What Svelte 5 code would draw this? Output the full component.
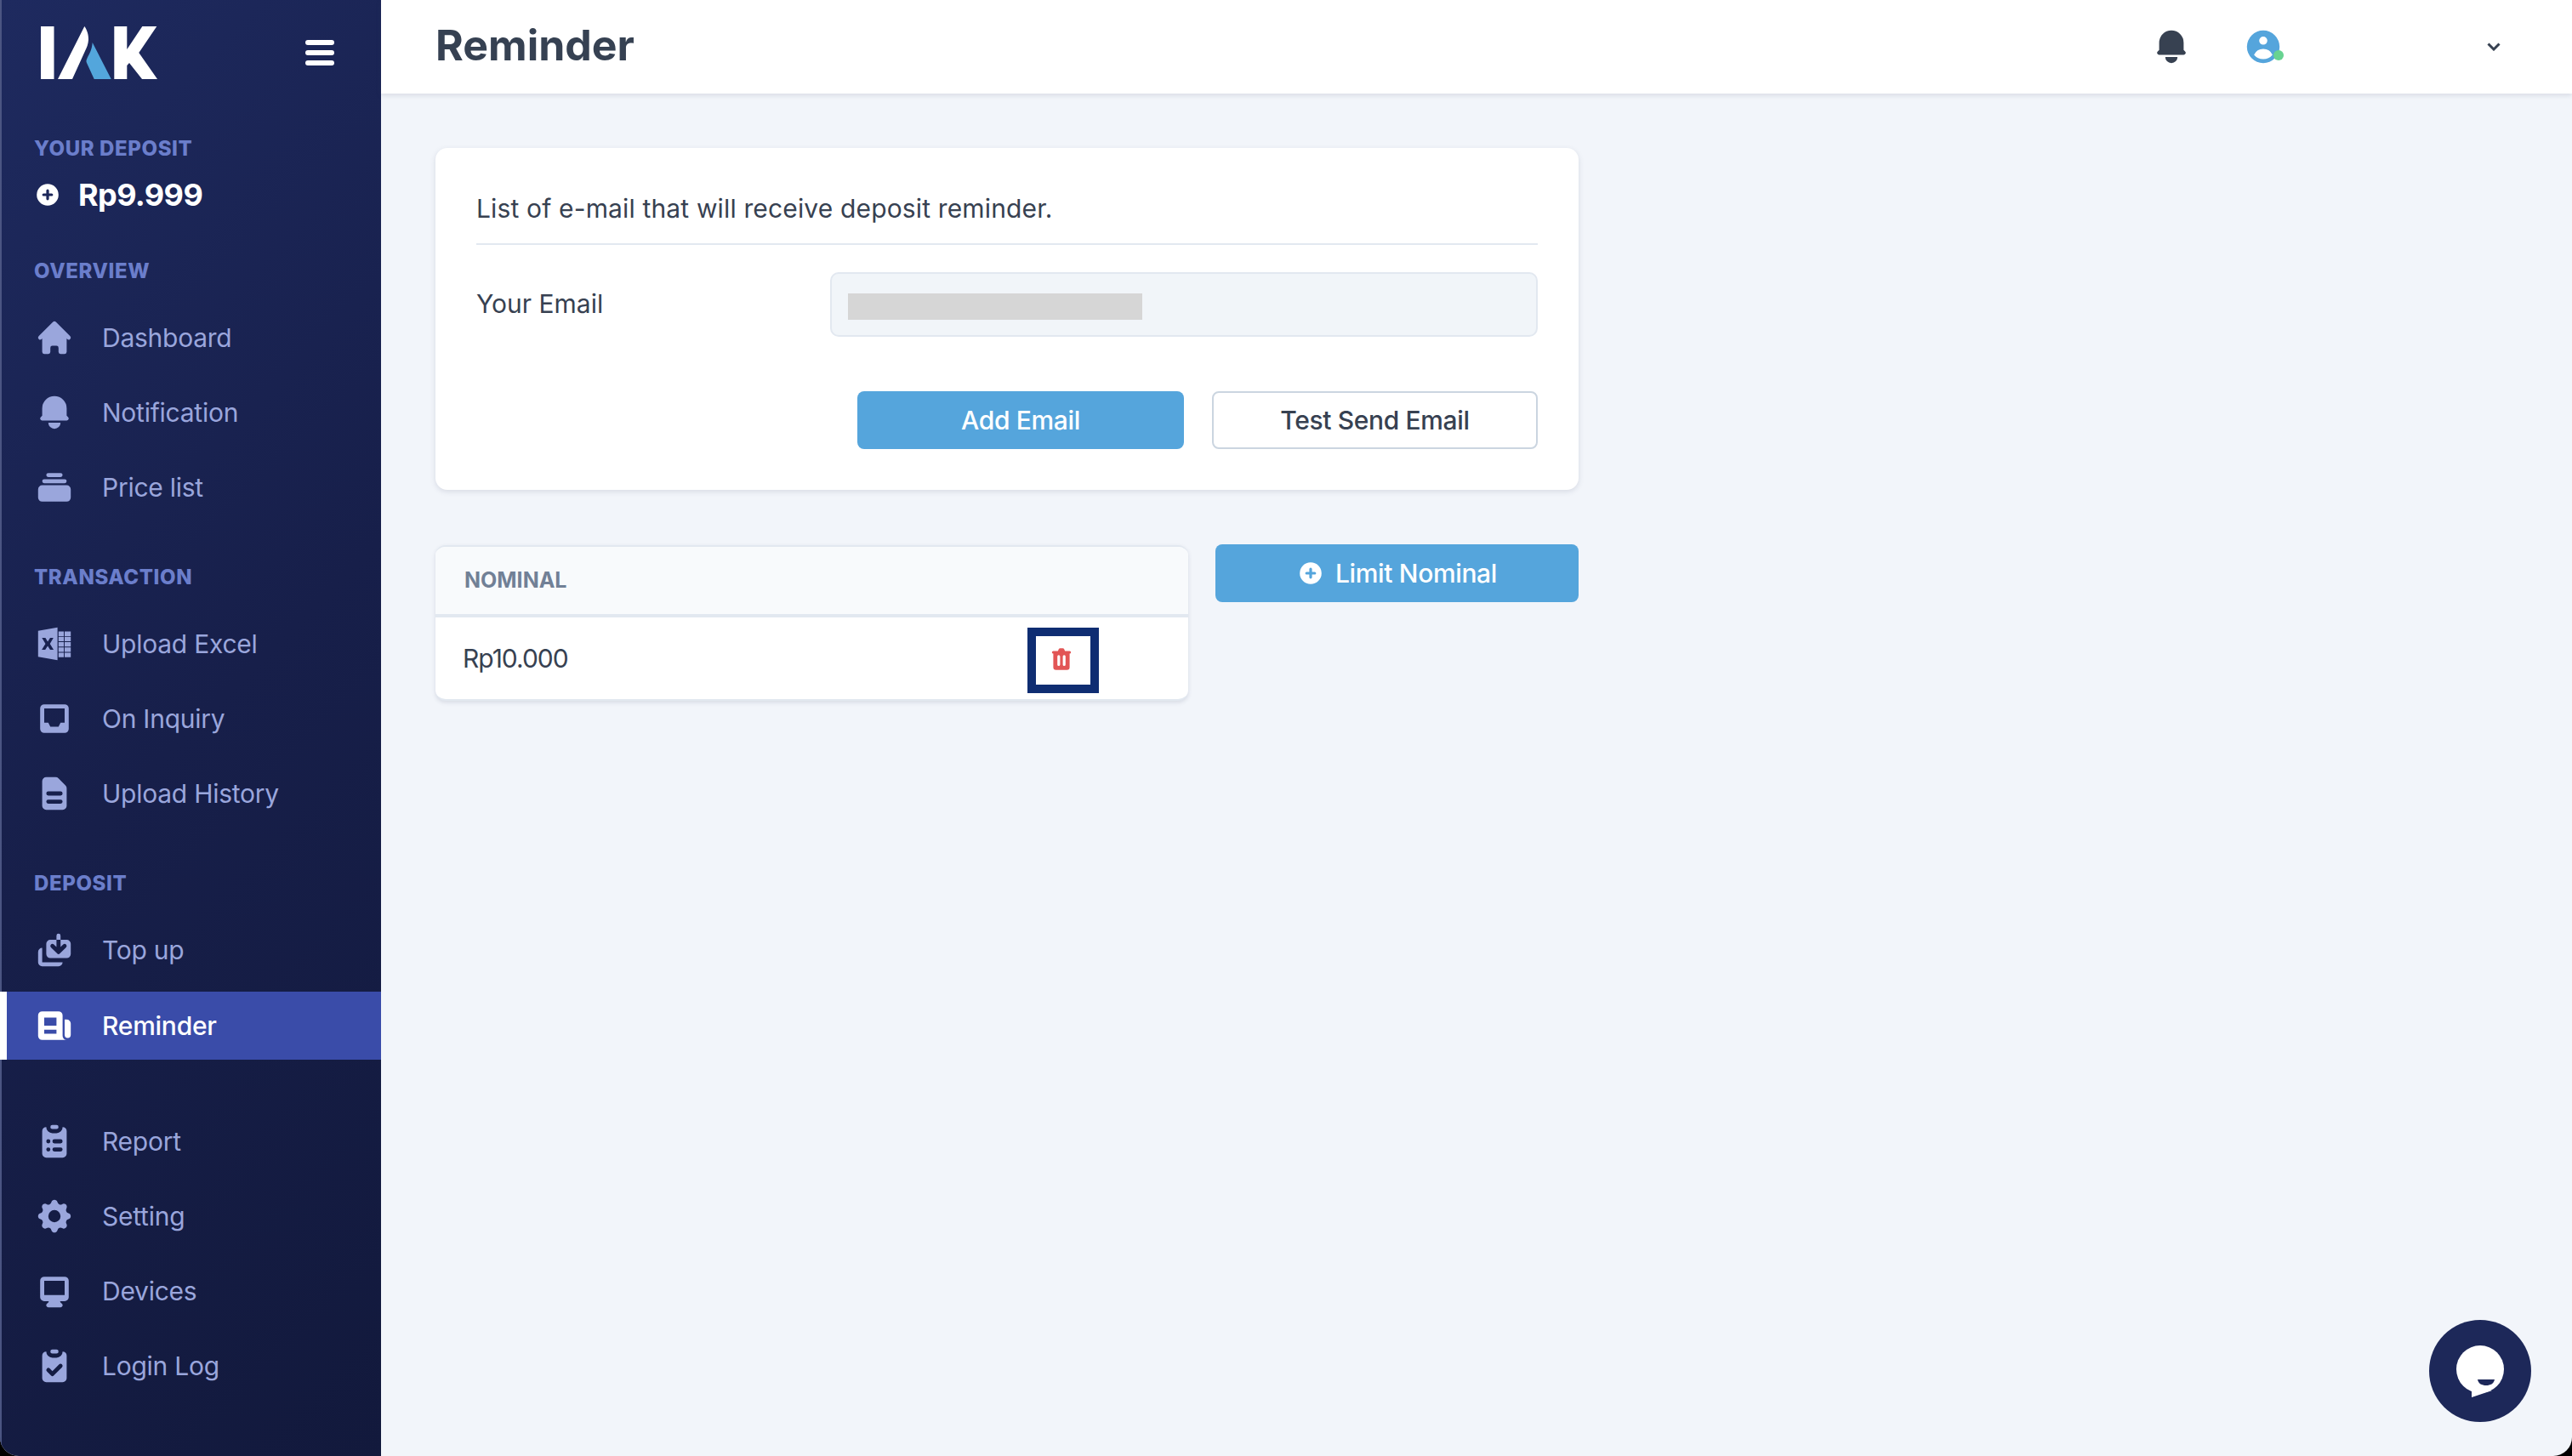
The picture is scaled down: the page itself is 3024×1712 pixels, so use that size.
<script>
  const rows = [];
  for (const y of [4, 6.6, 9.2, 11.8, 14.4]) {
    for (const [x, w] of [[12, 2.6], [15, 3]]) rows.push(`M${x} ${y}h${w}v2.2h-${w}z`);
  }
  const icons = {
    home: 'M10.707 2.293a1 1 0 00-1.414 0l-7 7a1 1 0 001.414 1.414L4 10.414V17a1 1 0 001 1h2a1 1 0 001-1v-2a1 1 0 011-1h2a1 1 0 011 1v2a1 1 0 001 1h2a1 1 0 001-1v-6.586l.293.293a1 1 0 001.414-1.414l-7-7z',
    bell: 'M10 2a6 6 0 00-6 6v3.586l-.707.707A1 1 0 004 14h12a1 1 0 00.707-1.707L16 11.586V8a6 6 0 00-6-6zM10 18a3 3 0 01-3-3h6a3 3 0 01-3 3z',
    collection: 'M7 3a1 1 0 000 2h6a1 1 0 100-2H7zM4 7a1 1 0 011-1h10a1 1 0 110 2H5a1 1 0 01-1-1zM2 11a2 2 0 012-2h12a2 2 0 012 2v4a2 2 0 01-2 2H4a2 2 0 01-2-2v-4z',
    excel: 'M2 3.6L11.5 2v16L2 16.4zM3.9 7.1L5.6 10l-1.8 2.9h1.7L6.7 11l1.2 1.9h1.7L7.8 10l1.7-2.9H7.9L6.7 9 5.6 7.1z' + rows.join(''),
    inbox: 'M5 3a2 2 0 00-2 2v10a2 2 0 002 2h10a2 2 0 002-2V5a2 2 0 00-2-2H5zm0 2h10v7h-2l-1 2H8l-1-2H5V5z',
    doc: 'M4 4a2 2 0 012-2h4.586A2 2 0 0112 2.586L15.414 6A2 2 0 0116 7.414V16a2 2 0 01-2 2H6a2 2 0 01-2-2V4zm2 6a1 1 0 011-1h6a1 1 0 110 2H7a1 1 0 01-1-1zm1 3a1 1 0 100 2h6a1 1 0 100-2H7z',
    saveas: 'M9.707 7.293a1 1 0 00-1.414 1.414l3 3a1 1 0 001.414 0l3-3a1 1 0 00-1.414-1.414L13 8.586V5h3a2 2 0 012 2v5a2 2 0 01-2 2H8a2 2 0 01-2-2V7a2 2 0 012-2h3v3.586L9.707 7.293zM11 3a1 1 0 112 0v2h-2V3zM4 9a2 2 0 00-2 2v5a2 2 0 002 2h8a2 2 0 002-2H4V9z',
    news: 'M2 5a2 2 0 012-2h8a2 2 0 012 2v10a2 2 0 002 2H4a2 2 0 01-2-2V5zm3 1h6v4H5V6zm6 6H5v2h6v-2zM15 7h1a2 2 0 012 2v5.5a1.5 1.5 0 01-3 0V7z',
    list: 'M9 2a1 1 0 000 2h2a1 1 0 100-2H9zM4 5a2 2 0 012-2 3 3 0 003 3h2a3 3 0 003-3 2 2 0 012 2v11a2 2 0 01-2 2H6a2 2 0 01-2-2V5zm3 4a1 1 0 000 2h.01a1 1 0 100-2H7zm3 0a1 1 0 000 2h3a1 1 0 100-2h-3zm-3 4a1 1 0 100 2h.01a1 1 0 100-2H7zm3 0a1 1 0 100 2h3a1 1 0 100-2h-3z',
    cog: 'M11.49 3.17c-.38-1.56-2.6-1.56-2.98 0a1.532 1.532 0 01-2.286.948c-1.372-.836-2.942.734-2.106 2.106.54.886.061 2.042-.947 2.287-1.561.379-1.561 2.6 0 2.978a1.532 1.532 0 01.947 2.287c-.836 1.372.734 2.942 2.106 2.106a1.532 1.532 0 012.287.947c.379 1.561 2.6 1.561 2.978 0a1.533 1.533 0 012.287-.947c1.372.836 2.942-.734 2.106-2.106a1.533 1.533 0 01.947-2.287c1.561-.379 1.561-2.6 0-2.978a1.532 1.532 0 01-.947-2.287c.836-1.372-.734-2.942-2.106-2.106a1.532 1.532 0 01-2.287-.947zM10 13a3 3 0 100-6 3 3 0 000 6z',
    desktop: 'M3 5a2 2 0 012-2h10a2 2 0 012 2v8a2 2 0 01-2 2h-2.22l.123.489.804.804A1 1 0 0113 18H7a1 1 0 01-.707-1.707l.804-.804L7.22 15H5a2 2 0 01-2-2V5zm5.771 7H5V5h10v7H8.771z',
    check: 'M9 2a1 1 0 000 2h2a1 1 0 100-2H9zM4 5a2 2 0 012-2 3 3 0 003 3h2a3 3 0 003-3 2 2 0 012 2v11a2 2 0 01-2 2H6a2 2 0 01-2-2V5zm9.707 5.707a1 1 0 00-1.414-1.414L9 12.586l-1.293-1.293a1 1 0 00-1.414 1.414l2 2a1 1 0 001.414 0l4-4z',
    user: 'M18 10a8 8 0 11-16 0 8 8 0 0116 0zm-6-3a2 2 0 11-4 0 2 2 0 014 0zm-2 4a5 5 0 00-4.546 2.916A5.986 5.986 0 0010 16a5.986 5.986 0 004.546-2.084A5 5 0 0010 11z',
    trash: 'M9 2a1 1 0 00-.894.553L7.382 4H4a1 1 0 000 2v10a2 2 0 002 2h8a2 2 0 002-2V6a1 1 0 100-2h-3.382l-.724-1.447A1 1 0 0011 2H9zM7 8a1 1 0 012 0v6a1 1 0 11-2 0V8zm5-1a1 1 0 00-1 1v6a1 1 0 102 0V8a1 1 0 00-1-1z',
    plus: 'M10 18a8 8 0 100-16 8 8 0 000 16zm1-11a1 1 0 10-2 0v2H7a1 1 0 100 2h2v2a1 1 0 102 0v-2h2a1 1 0 100-2h-2V7z'
  };
  const groups = [
    { label: 'OVERVIEW', items: [['home', 'Dashboard'], ['bell', 'Notification'], ['collection', 'Price list']] },
    { label: 'TRANSACTION', items: [['excel', 'Upload Excel'], ['inbox', 'On Inquiry'], ['doc', 'Upload History']] },
    { label: 'DEPOSIT', items: [['saveas', 'Top up'], ['news', 'Reminder']] },
    { label: '', items: [['list', 'Report'], ['cog', 'Setting'], ['desktop', 'Devices'], ['check', 'Login Log']] }
  ];
</script>

<div class="window">
  <aside class="sidebar">
    <div class="brand">
      <svg class="logo" viewBox="48 31 137 62" aria-label="IAK logo">
        <path fill="#fff" d="M48 31h15.5v62H48zM68 93L99.3 31c3 4 5 10 4.7 16-.3 5-2 9-4 13L85 93zM134.300 31h15v27l18-27h17l-21 31 21.700 31h-18l-15-19-2.700 3V93h-15z" />
        <path fill="#53a6dc" d="M108.700 50L130.700 93h-20l-8.700-19c-1-2-.5-3.500.7-6 2.500-5 5.500-10 6-18z" />
      </svg>
      <div class="burger"><span></span><span></span><span></span></div>
    </div>
    <div class="deposit">
      <div class="label">YOUR DEPOSIT</div>
      <div class="amount">
        <svg class="plus" viewBox="0 0 20 20"><path fill="#fff" fill-rule="evenodd" d={icons.plus} /></svg>
        <span>Rp9.999</span>
      </div>
    </div>
    {#each groups as g}
      <section class="group" class:plain={!g.label}>
        {#if g.label}<div class="label">{g.label}</div>{/if}
        {#each g.items as [ic, name]}
          <div class="item" class:active={name === 'Reminder'}>
            <svg viewBox="0 0 20 20"><path fill="currentColor" fill-rule="evenodd" d={icons[ic]} /></svg>
            <span>{name}</span>
          </div>
        {/each}
      </section>
    {/each}
  </aside>

  <div class="main">
    <header class="topbar">
      <h1>Reminder</h1>
      <div class="tools">
        <svg class="tool bell" viewBox="0 0 20 20"><path fill="currentColor" d={icons.bell} /></svg>
        <div class="avatar">
          <svg class="tool" viewBox="0 0 20 20"><path fill="#55a5dc" fill-rule="evenodd" d={icons.user} /></svg>
          <i class="dot"></i>
        </div>
        <svg class="chev" viewBox="0 0 16 10"><path d="M1.500 1.500L8 8l6.500-6.500" fill="none" stroke="#374151" stroke-width="3" /></svg>
      </div>
    </header>

    <div class="content">
      <div class="card">
        <p class="intro">List of e-mail that will receive deposit reminder.</p>
        <div class="field">
          <span>Your Email</span>
          <div class="input"><b class="redact"></b></div>
        </div>
        <div class="actions">
          <button class="btn primary wide">Add Email</button>
          <button class="btn ghost">Test Send Email</button>
        </div>
      </div>

      <div class="second">
        <div class="table">
          <div class="thead">NOMINAL</div>
          <div class="trow">
            <span>Rp10.000</span>
            <div class="del">
              <svg viewBox="0 0 20 20"><path fill="#e25555" fill-rule="evenodd" d={icons.trash} /></svg>
            </div>
          </div>
        </div>
        <button class="btn primary limit">
          <svg viewBox="0 0 20 20"><path fill="#fff" fill-rule="evenodd" d={icons.plus} /></svg>
          Limit Nominal
        </button>
      </div>
    </div>
  </div>

  <div class="chat">
    <svg viewBox="0 0 120 120">
      <circle cx="60" cy="60" r="60" fill="#1d2859" />
      <circle cx="60" cy="58" r="28" fill="#fff" />
      <path fill="#fff" d="M50 80v11l24-8z" />
      <path fill="#1d2859" d="M57 70h20c-1 5-5 7-10 7s-9-2-10-7z" />
    </svg>
  </div>
</div>

<style>
  :global(body) { margin: 0; background: #000; }
  .window {
    position: relative; display: flex; width: 3024px; height: 1712px; overflow: hidden;
    border-radius: 0 0 22px 22px; background: #f2f5fa;
    font-family: Inter, "Open Sans", sans-serif; color: #374151;
  }
  .sidebar {
    width: 448px; flex: none; box-sizing: border-box;
    background: linear-gradient(135deg, #1e2a5f 0%, #171f4a 50%, #12193c 100%);
    box-shadow: inset 2px 0 0 #4b5582;
  }
  .brand { height: 110px; position: relative; display: flex; align-items: center; justify-content: space-between; padding: 0 55px 0 48px; }
  .logo { width: 137px; height: 62px; display: block; margin-top: 14px; }
  .burger { display: flex; flex-direction: column; gap: 6px; width: 34px; margin-top: 14px; }
  .burger span { height: 6px; border-radius: 3px; background: #fff; }
  .label { height: 30px; line-height: 33px; padding-left: 40px; font-size: 24px; font-weight: 800; color: #6b7ecb; letter-spacing: .6px; }
  .deposit { padding-top: 48px; }
  .amount { display: flex; align-items: center; height: 50px; margin-top: 16px; padding-left: 40px; color: #fff; font-size: 36px; font-weight: 700; letter-spacing: -.6px; }
  .plus { width: 32px; height: 32px; margin-right: 20px; }
  .group { margin-top: 49px; }
  .group:first-of-type { margin-top: 48px; }
  .group.plain { margin-top: 56px; }
  .group .label { margin-bottom: 25px; }
  .item { display: flex; align-items: center; gap: 32px; height: 80px; margin-bottom: 8px; padding-left: 40px; color: #9aa6dc; font-size: 30px; letter-spacing: -.25px; }
  .item svg { width: 48px; height: 48px; flex: none; }
  .item.active { box-sizing: border-box; margin-top: 9px; margin-bottom: 0; padding-left: 32px; border-left: 8px solid #fff; background: #3a4ca9; color: #fff; font-weight: 500; }
  .main { flex: 1; min-width: 0; }
  .topbar { height: 110px; background: #fff; display: flex; align-items: center; justify-content: space-between; padding: 0 84px 0 64px; box-shadow: 0 2px 6px rgba(60, 70, 100, .15); }
  h1 { margin: -4px 0 0; font-size: 50px; font-weight: 700; color: #364152; }
  .tools { display: flex; align-items: center; }
  .tool { width: 48px; height: 48px; display: block; }
  .bell { color: #374151; }
  .avatar { position: relative; margin-left: 60px; }
  .dot { position: absolute; left: 36px; top: 28px; width: 12px; height: 12px; border-radius: 50%; background: #68d391; }
  .chev { width: 16px; height: 10px; margin-left: 239px; }
  .content { padding: 64px; }
  .card { box-sizing: border-box; width: 1344px; height: 402px; padding: 48px 48px; background: #fff; border-radius: 14px; box-shadow: 0 2px 6px rgba(60, 70, 100, .15); }
  .intro { margin: 0; height: 50px; line-height: 47px; font-size: 30px; letter-spacing: .15px; padding-bottom: 14px; border-bottom: 2px solid #e2e8f0; }
  .field { display: flex; align-items: center; margin-top: 32px; font-size: 30px; }
  .field span { width: 416px; flex: none; margin-top: -2px; }
  .input { box-sizing: border-box; flex: 1; height: 76px; padding-top: 23px; padding-left: 19px; background: #f1f5f9; border: 2px solid #e2e8f0; border-radius: 10px; }
  .redact { display: block; width: 346px; height: 31px; background: #d6d6d6; }
  .actions { display: flex; justify-content: flex-end; gap: 33px; margin-top: 64px; }
  .btn { box-sizing: border-box; height: 68px; border-radius: 8px; font-family: inherit; font-size: 30px; font-weight: 500; letter-spacing: -.35px; cursor: pointer; }
  .btn.primary { background: #55a5dc; color: #fff; border: 0; }
  .btn.wide { width: 384px; }
  .btn.ghost { width: 383px; background: #fff; color: #374151; border: 2px solid #cbd5e0; }
  .second { display: flex; align-items: flex-start; gap: 32px; width: 1344px; margin-top: 64px; }
  .table { box-sizing: border-box; width: 885px; flex: none; margin-top: 1px; overflow: hidden; background: #fff; border-radius: 12px; border-top: 2px solid #e2e8f0; border-bottom: 2px solid #e2e8f0; box-shadow: 0 2px 5px rgba(60, 70, 100, .15); }
  .thead { box-sizing: border-box; height: 83px; padding-left: 34px; line-height: 79px; background: #f8fafc; border-bottom: 4px solid #e2e8f0; color: #718096; font-size: 25px; font-weight: 700; }
  .trow { position: relative; display: flex; align-items: center; height: 96px; padding-left: 32px; font-size: 30px; letter-spacing: -1px; }
  .del { position: absolute; left: 696px; top: 12px; box-sizing: border-box; width: 84px; height: 77px; padding: 0 4px 4px 0; display: flex; align-items: center; justify-content: center; border: 10px solid #0f2d72; }
  .del svg { width: 32px; height: 32px; }
  .limit { flex: 1; display: flex; align-items: center; justify-content: center; gap: 13px; }
  .limit svg { width: 32px; height: 32px; }
  .chat { position: absolute; left: 2856px; top: 1552px; width: 120px; height: 120px; }
  .chat svg { display: block; }
</style>
